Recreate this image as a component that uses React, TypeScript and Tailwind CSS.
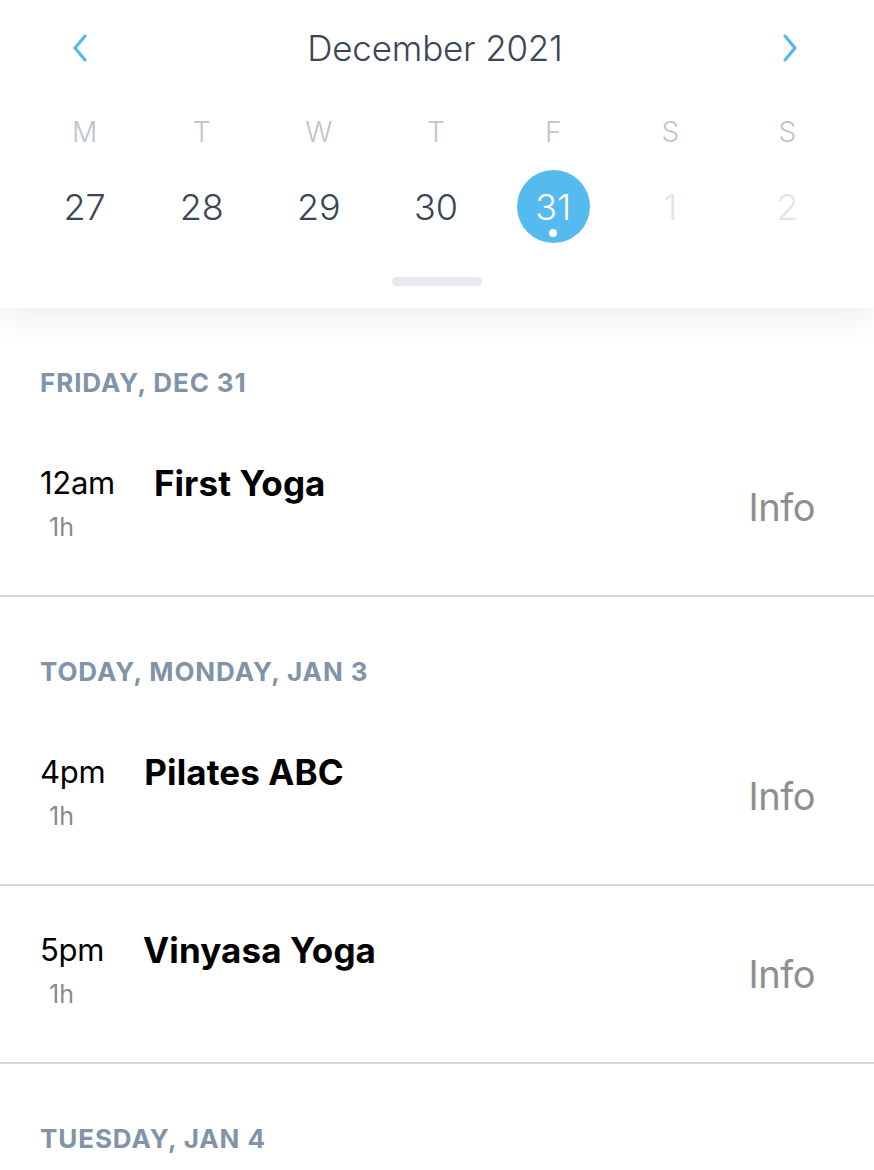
import React from "react";

const weekdays = ["M", "T", "W", "T", "F", "S", "S"];

const days = [
  { n: "27" },
  { n: "28" },
  { n: "29" },
  { n: "30" },
  { n: "31", selected: true },
  { n: "1", faded: true },
  { n: "2", faded: true },
];

type ClassItem = { time: string; title: string; duration: string };

const sections: { label: string; items: ClassItem[] }[] = [
  {
    label: "Friday, Dec 31",
    items: [{ time: "12am", title: "First Yoga", duration: "1h" }],
  },
  {
    label: "Today, Monday, Jan 3",
    items: [
      { time: "4pm", title: "Pilates ABC", duration: "1h" },
      { time: "5pm", title: "Vinyasa Yoga", duration: "1h" },
    ],
  },
  { label: "Tuesday, Jan 4", items: [] },
];

function Chevron({ dir }: { dir: "left" | "right" }) {
  return (
    <svg width="16" height="28" viewBox="0 0 16 28" fill="none">
      <path
        d={dir === "left" ? "M13 2 L3 14 L13 26" : "M3 2 L13 14 L3 26"}
        stroke="#4fb9ec"
        strokeWidth="3"
        strokeLinecap="round"
        strokeLinejoin="round"
      />
    </svg>
  );
}

function CalendarHeader() {
  return (
    <div className="relative z-10 bg-white shadow-[0_14px_28px_rgba(0,0,0,0.06)]">
      {/* month switcher */}
      <div className="flex h-[96px] items-center pl-[72px] pr-[76px]">
        <Chevron dir="left" />
        <div className="flex-1 text-center text-[35px] font-light leading-none tracking-[-0.2px] text-[#394655]">
          December 2021
        </div>
        <Chevron dir="right" />
      </div>

      {/* week strip */}
      <div className="grid grid-cols-7 pl-[26px] pr-[28px] pt-[18px]">
        {weekdays.map((d, i) => (
          <div
            key={i}
            className="text-center text-[28px] font-light leading-[36px] text-[#bcc4cd]"
          >
            {d}
          </div>
        ))}
      </div>
      <div className="grid grid-cols-7 pl-[26px] pr-[28px] pt-[20px]">
        {days.map((d) => (
          <div key={d.n} className="flex justify-center">
            {d.selected ? (
              <div className="relative flex h-[73px] w-[73px] items-center justify-center rounded-full bg-[#55bbee] text-[36px] font-light text-white">
                {d.n}
                <span className="absolute bottom-[6px] left-1/2 h-[8px] w-[8px] -translate-x-1/2 rounded-full bg-white" />
              </div>
            ) : (
              <div
                className={
                  "flex h-[73px] items-center justify-center text-[36px] font-light " +
                  (d.faded ? "text-[#e1e5ea]" : "text-[#394655]")
                }
              >
                {d.n}
              </div>
            )}
          </div>
        ))}
      </div>

      {/* drag handle */}
      <div className="flex justify-center pt-[34px] pb-[22px]">
        <div className="h-[9px] w-[90px] rounded-full bg-[#e6e9ed]" />
      </div>
    </div>
  );
}

function ClassRow({ item }: { item: ClassItem }) {
  return (
    <div className="flex h-[178px] items-center justify-between border-b-2 border-[#d8d8d8] pl-[40px] pr-[59px]">
      <div className="mb-[6px] flex items-start gap-[39px]">
        <div className="flex flex-col">
          <span className="text-[31px] leading-[34px] tracking-[-0.3px] text-black">
            {item.time}
          </span>
          <span className="ml-[9px] mt-[12px] text-[25px] leading-[30px] text-[#8a8a8a]">
            {item.duration}
          </span>
        </div>
        <span className="mt-[-2px] text-[35px] font-bold leading-[38px] tracking-[0.1px] text-black">
          {item.title}
        </span>
      </div>
      <span className="text-[38px] leading-none tracking-[-0.5px] text-[#8e8e90]">
        Info
      </span>
    </div>
  );
}

export default function App() {
  return (
    <div className="h-[1170px] w-[874px] overflow-hidden bg-white font-['Inter',sans-serif]">
      <CalendarHeader />
      <div>
        {sections.map((s) => (
          <div key={s.label}>
            <div className="pt-[63px] pb-[24px] pl-[40px] text-[26px] font-bold uppercase leading-[24px] tracking-[0.9px] text-[#8194a7]">
              {s.label}
            </div>
            {s.items.map((it) => (
              <ClassRow key={it.title} item={it} />
            ))}
          </div>
        ))}
      </div>
    </div>
  );
}
